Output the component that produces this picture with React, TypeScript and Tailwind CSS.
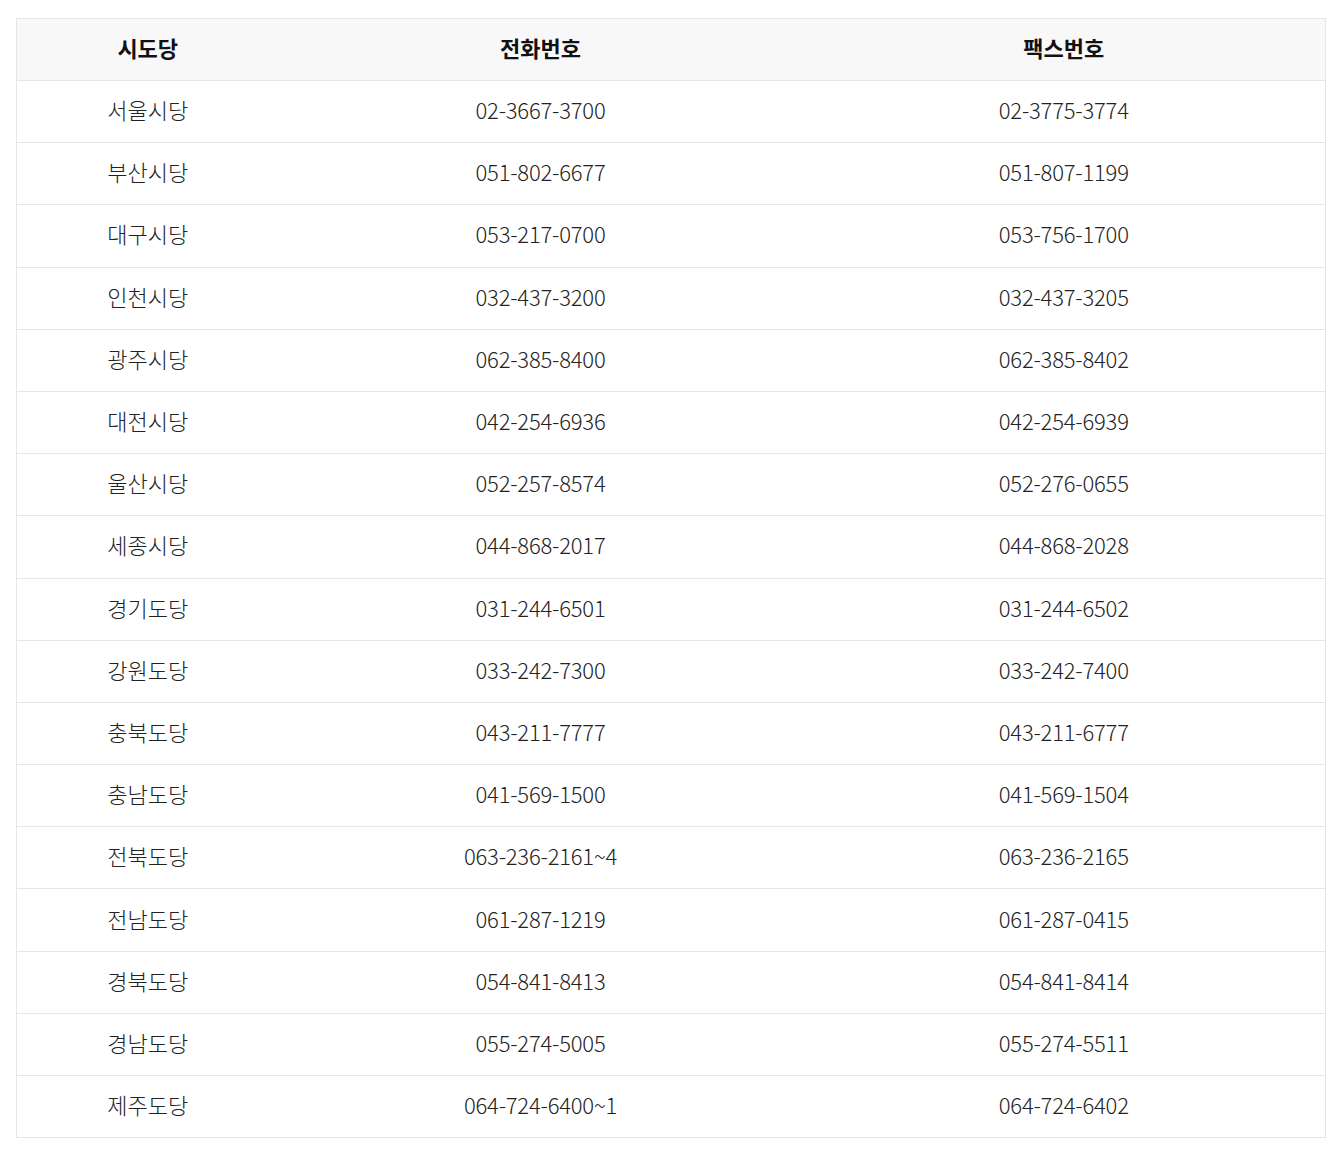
const ROWS: [string, string, string][] = [
  ['서울시당', '02-3667-3700', '02-3775-3774'],
  ['부산시당', '051-802-6677', '051-807-1199'],
  ['대구시당', '053-217-0700', '053-756-1700'],
  ['인천시당', '032-437-3200', '032-437-3205'],
  ['광주시당', '062-385-8400', '062-385-8402'],
  ['대전시당', '042-254-6936', '042-254-6939'],
  ['울산시당', '052-257-8574', '052-276-0655'],
  ['세종시당', '044-868-2017', '044-868-2028'],
  ['경기도당', '031-244-6501', '031-244-6502'],
  ['강원도당', '033-242-7300', '033-242-7400'],
  ['충북도당', '043-211-7777', '043-211-6777'],
  ['충남도당', '041-569-1500', '041-569-1504'],
  ['전북도당', '063-236-2161~4', '063-236-2165'],
  ['전남도당', '061-287-1219', '061-287-0415'],
  ['경북도당', '054-841-8413', '054-841-8414'],
  ['경남도당', '055-274-5005', '055-274-5511'],
  ['제주도당', '064-724-6400~1', '064-724-6402'],
]

export default function App() {
  return (
    <div className="min-h-screen bg-white px-4 pt-[18px] font-['Noto_Sans_CJK_KR','Noto_Sans',sans-serif]">
      <table className="w-[1309px] border-collapse table-fixed">
        <colgroup>
          <col className="w-[262px]" />
          <col className="w-[524px]" />
          <col className="w-[523px]" />
        </colgroup>
        <thead>
          <tr className="h-[62px] bg-[#f8f8f8]">
            <th className="border-y border-l border-[#e6e6e6] pb-[4px] text-[22px] font-bold text-[#111]">시도당</th>
            <th className="border-y border-[#e6e6e6] pb-[4px] text-[22px] font-bold text-[#111]">전화번호</th>
            <th className="border-y border-r border-[#e6e6e6] pb-[4px] text-[22px] font-bold text-[#111]">팩스번호</th>
          </tr>
        </thead>
        <tbody>
          {ROWS.map(([name, tel, fax]) => (
            <tr key={name} className="h-[62.2px]">
              <td className="border-y border-l border-[#e6e6e6] pb-[4px] text-center text-[22px] font-light text-[#222]">{name}</td>
              <td className="border-y border-[#e6e6e6] pb-[4px] text-center text-[22px] font-light text-[#222] tracking-[-0.2px]">{tel}</td>
              <td className="border-y border-r border-[#e6e6e6] pb-[4px] text-center text-[22px] font-light text-[#222] tracking-[-0.2px]">{fax}</td>
            </tr>
          ))}
        </tbody>
      </table>
    </div>
  )
}
